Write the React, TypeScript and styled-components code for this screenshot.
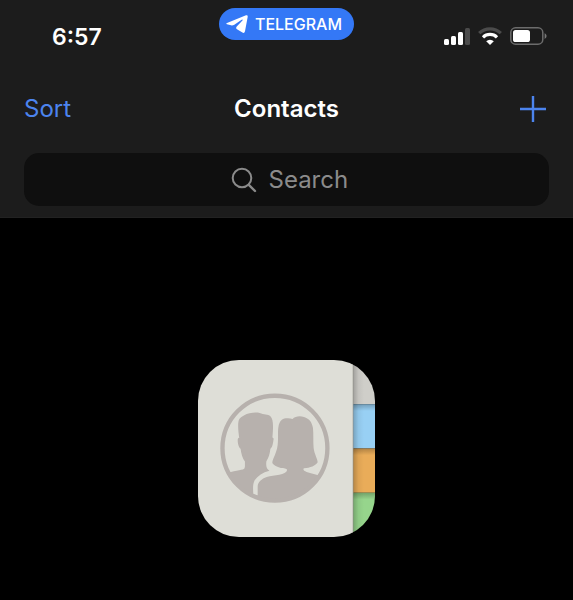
import React from "react";
import styled, { createGlobalStyle } from "styled-components";

const GlobalStyle = createGlobalStyle`
  *, *::before, *::after { box-sizing: border-box; }
  body {
    margin: 0;
    background: #000;
    color: #fff;
    font-family: Inter, "Liberation Sans", sans-serif;
    -webkit-font-smoothing: antialiased;
  }
`;

const Header = styled.header`
  background: #1c1c1c;
  border-bottom: 1px solid #222;
  padding-bottom: 11px;
`;

const StatusBar = styled.div`
  display: grid;
  grid-template-columns: 1fr auto 1fr;
  align-items: center;
  height: 72px;
  padding: 0 26px 0 52px;
`;

const Clock = styled.time`
  padding-top: 2px;
  font-size: 23px;
  line-height: 28px;
  font-weight: 600;
`;

const AppPill = styled.button`
  display: flex;
  align-items: center;
  align-self: start;
  gap: 7px;
  height: 32px;
  margin: 8px 26px 0 0;
  padding: 0 12px 0 7px;
  border: 0;
  border-radius: 16px;
  background: #3478f6;
  color: #fff;
  font: 500 16px/20px Inter, "Liberation Sans", sans-serif;
`;

const StatusIcons = styled.div`
  display: flex;
  align-items: center;
  justify-content: flex-end;
  gap: 8px;
`;

const NavBar = styled.nav`
  display: grid;
  grid-template-columns: 1fr auto 1fr;
  align-items: center;
  height: 74px;
  padding: 0 24px;
`;

const Title = styled.h1`
  margin: 0;
  font-size: 24px;
  line-height: 32px;
  font-weight: 600;
`;

const NavButton = styled.button<{ $end?: boolean }>`
  display: flex;
  justify-self: ${(p) => (p.$end ? "end" : "start")};
  padding: ${(p) => (p.$end ? "0 2px 0 0" : "0")};
  border: 0;
  background: none;
  color: #4c84ee;
  font: 400 24px/32px Inter, "Liberation Sans", sans-serif;
`;

const SearchField = styled.label`
  display: flex;
  align-items: center;
  justify-content: center;
  gap: 12px;
  height: 53px;
  margin: 7px 24px 0;
  padding-left: 6px;
  border-radius: 15px;
  background: #0f0f0f;
  color: #8b8b8b;
`;

const SearchInput = styled.input`
  width: 80px;
  padding: 0;
  border: 0;
  outline: 0;
  background: none;
  color: #fff;
  font: 400 24px/32px Inter, "Liberation Sans", sans-serif;
  &::placeholder { color: #8b8b8b; opacity: 1; }
`;

const Content = styled.main`
  display: flex;
  justify-content: center;
  padding: 142px 24px 60px;
`;

const ContactsIcon = styled.div`
  display: flex;
  width: 177px;
  height: 177px;
  border-radius: 41px;
  overflow: hidden;
`;

const PaperPlane = () => (
  <svg width="22" height="20" viewBox="0 0 66 60" fill="#fff" aria-hidden="true">
    <path d="M3 27L60 4Q66 2 65 9L57 52Q55 60 48 55L33 46Q28 42 33 37L50 19Q51 15 47 17L25 32Q20 35 15 34L3 31Q-1 29 3 27Z" />
  </svg>
);

const Signal = () => (
  <svg width="26" height="18" viewBox="0 0 26 18" fill="#fff" aria-label="Signal strength">
    <rect x="0" y="12" width="5" height="6" rx="1.5" />
    <rect x="7" y="9" width="5" height="9" rx="1.5" />
    <rect x="14" y="5" width="5" height="13" rx="1.5" />
    <rect x="21" y="1" width="5" height="17" rx="1.5" fill="#4b4b4b" />
  </svg>
);

const Wifi = () => (
  <svg width="24" height="18" viewBox="0 0 24 18" fill="none" aria-label="Wi-Fi">
    <path d="M1.2 6.2a15.4 15.4 0 0 1 21.6 0" stroke="#4b4b4b" strokeWidth="3.2" />
    <path d="M5 10.3a10 10 0 0 1 14 0" stroke="#fff" strokeWidth="3.2" />
    <path d="M8.2 14.2a5.4 5.4 0 0 1 7.6 0L12 18Z" fill="#fff" />
  </svg>
);

const Battery = () => (
  <svg width="37" height="18" viewBox="0 0 37 18" fill="none" aria-label="Battery">
    <rect x="0.8" y="0.8" width="32" height="16.4" rx="4.8" stroke="#6c6c6c" strokeWidth="1.5" />
    <rect x="3" y="3" width="17" height="12" rx="2.6" fill="#fff" />
    <path d="M34.6 6.2c2.6 1.2 2.6 4.6 0 5.8Z" fill="#777" />
  </svg>
);

const Plus = () => (
  <svg width="28" height="28" viewBox="0 0 28 28" fill="none" stroke="currentColor" strokeWidth="2.4" aria-hidden="true">
    <path d="M1 14H27M14 1V27" />
  </svg>
);

const Magnifier = () => (
  <svg width="26" height="26" viewBox="0 0 26 26" fill="none" stroke="currentColor" strokeWidth="2" strokeLinecap="round" aria-hidden="true">
    <circle cx="11" cy="11" r="9.3" />
    <path d="M17.8 17.8L24 24" strokeWidth="2.4" />
  </svg>
);

const AddressBook = () => (
  <svg width="177" height="177" viewBox="25 31 528 528" role="img" aria-label="Contacts">
    <defs>
      <linearGradient id="pageShade">
        <stop offset="0" stopColor="#000" stopOpacity="0.22" />
        <stop offset="0.5" stopColor="#000" stopOpacity="0.05" />
        <stop offset="1" stopColor="#000" stopOpacity="0" />
      </linearGradient>
      <linearGradient id="tabShade" x1="0" y1="0" x2="0" y2="1">
        <stop offset="0" stopColor="#000" stopOpacity="0.24" />
        <stop offset="1" stopColor="#000" stopOpacity="0" />
      </linearGradient>
      <clipPath id="disc">
        <circle cx="254.5" cy="294" r="157" />
      </clipPath>
    </defs>
    <rect x="25" y="31" width="463" height="528" fill="#deded7" />
    <rect x="488" y="31" width="65" height="132" fill="#cfcec9" />
    <rect x="488" y="163" width="65" height="132" fill="#98d0f4" />
    <rect x="488" y="295" width="65" height="132" fill="#e9ac59" />
    <rect x="488" y="427" width="65" height="132" fill="#96d58c" />
    {[163, 295, 427].map((y) => (
      <rect key={y} x="488" y={y} width="65" height="20" fill="url(#tabShade)" />
    ))}
    <rect x="488" y="31" width="32" height="528" fill="url(#pageShade)" />
    <rect x="485" y="31" width="3" height="528" fill="#c5c5bd" />
    <g clipPath="url(#disc)" fill="#b7b1ad">
      <path d="M85 380C110 365 145 361 159 358Q165 356 165 349V334C158 325 154 311 152 296C146 292 142 274 144 266Q145 263 148 263C146 251 143 225 146 213C149 202 157 201 163 196C175 188 198 186 209 189C221 194 234 192 241 199C250 209 250 226 247 262Q252 263 250 270C249 281 246 294 241 296C239 312 236 323 229 333C227 348 230 357 238 361C218 366 203 376 194 390C188 402 189 415 190 431V470H85Z" />
      <path d="M203 435V408C203 396 215 385 230 380C252 374 288 374 291 359C290 354 281 354 272 353C260 350 252 346 247 339C245 331 256 315 261 294C266 270 262 244 265 230C267 216 275 206 287 205C296 204 301 205 307 207C314 199 329 197 341 201C358 206 365 217 368 234C370 252 368 274 370 294C372 311 382 326 382 336C376 346 360 353 341 354C337 358 341 362 349 365C365 371 386 374 405 382V470H189V431Z" />
    </g>
    <circle cx="254.5" cy="294" r="156.5" fill="none" stroke="#b7b1ad" strokeWidth="13" />
  </svg>
);

export default function App() {
  return (
    <>
      <GlobalStyle />
      <Header>
        <StatusBar>
          <Clock>6:57</Clock>
          <AppPill type="button">
            <PaperPlane />
            TELEGRAM
          </AppPill>
          <StatusIcons>
            <Signal />
            <Wifi />
            <Battery />
          </StatusIcons>
        </StatusBar>
        <NavBar>
          <NavButton type="button">Sort</NavButton>
          <Title>Contacts</Title>
          <NavButton type="button" $end aria-label="Add contact">
            <Plus />
          </NavButton>
        </NavBar>
        <SearchField>
          <Magnifier />
          <SearchInput type="text" placeholder="Search" aria-label="Search" />
        </SearchField>
      </Header>
      <Content>
        <ContactsIcon>
          <AddressBook />
        </ContactsIcon>
      </Content>
    </>
  );
}
